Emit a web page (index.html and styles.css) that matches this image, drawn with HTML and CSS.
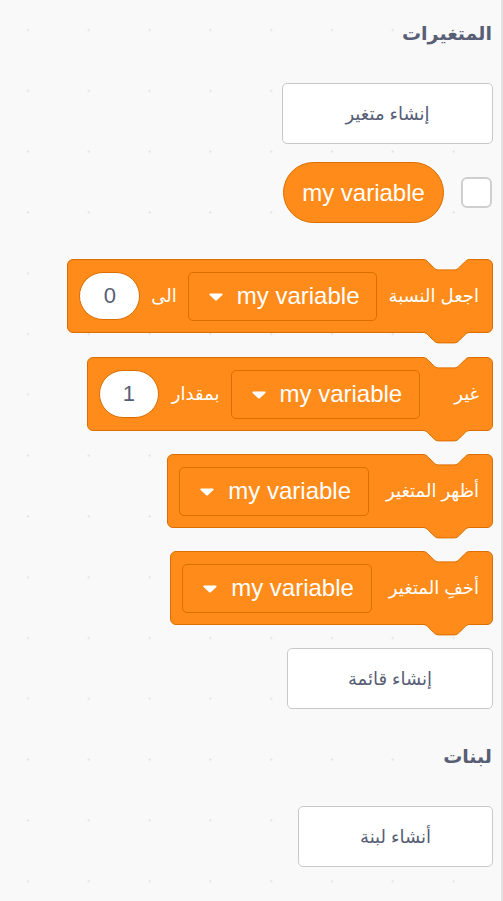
FILE: index.html
```html
<!DOCTYPE html>
<html lang="ar">
<head>
<meta charset="utf-8">
<title>المتغيرات</title>
<link rel="stylesheet" href="styles.css">
</head>
<body>
<div class="palette">
  <h2 class="cat-title cat-vars">المتغيرات</h2>

  <button class="make-btn btn-var">إنشاء متغير</button>

  <div class="reporter-row">
    <span class="checkbox"></span>
    <div class="reporter">my variable</div>
  </div>

  <div class="block block-set">
    <svg class="notch" width="50" height="13" viewBox="0 0 50 13"><path class="nf" d="M1,0 H47.8 V0.5 C45.2,0.5 43.9,1.8 42.6,3.1 L37.4,8.3 C36.1,9.6 34.8,10.9 32.2,10.9 H16.6 C14,10.9 12.7,9.6 11.4,8.3 L6.2,3.1 C4.9,1.8 3.6,0.5 1,0.5 Z"/><path class="ns" d="M1,0.5 C3.6,0.5 4.9,1.8 6.2,3.1 L11.4,8.3 C12.7,9.6 14,10.9 16.6,10.9 H32.2 C34.8,10.9 36.1,9.6 37.4,8.3 L42.6,3.1 C43.9,1.8 45.2,0.5 47.8,0.5"/></svg>
    <span class="label">اجعل النسبة</span>
    <span class="dropdown"><span class="dd-text">my variable</span><svg class="arrow" width="14" height="8" viewBox="0 0 14 8"><path d="M1.2,0.5 H12.8 C13.6,0.5 13.9,1.3 13.4,1.9 L7.8,7.3 C7.4,7.7 6.6,7.7 6.2,7.3 L0.6,1.9 C0.1,1.3 0.4,0.5 1.2,0.5 Z"/></svg></span>
    <span class="label">الى</span>
    <span class="num num-wide">0</span>
    <svg class="tab" width="50" height="13" viewBox="0 0 50 13"><path class="tf" d="M1,0 H47.8 V0.5 C45.2,0.5 43.9,1.8 42.6,3.1 L37.4,8.3 C36.1,9.6 34.8,10.9 32.2,10.9 H16.6 C14,10.9 12.7,9.6 11.4,8.3 L6.2,3.1 C4.9,1.8 3.6,0.5 1,0.5 Z"/><path class="ns" d="M1,0.5 C3.6,0.5 4.9,1.8 6.2,3.1 L11.4,8.3 C12.7,9.6 14,10.9 16.6,10.9 H32.2 C34.8,10.9 36.1,9.6 37.4,8.3 L42.6,3.1 C43.9,1.8 45.2,0.5 47.8,0.5"/></svg>
  </div>

  <div class="block block-change">
    <svg class="notch" width="50" height="13" viewBox="0 0 50 13"><path class="nf" d="M1,0 H47.8 V0.5 C45.2,0.5 43.9,1.8 42.6,3.1 L37.4,8.3 C36.1,9.6 34.8,10.9 32.2,10.9 H16.6 C14,10.9 12.7,9.6 11.4,8.3 L6.2,3.1 C4.9,1.8 3.6,0.5 1,0.5 Z"/><path class="ns" d="M1,0.5 C3.6,0.5 4.9,1.8 6.2,3.1 L11.4,8.3 C12.7,9.6 14,10.9 16.6,10.9 H32.2 C34.8,10.9 36.1,9.6 37.4,8.3 L42.6,3.1 C43.9,1.8 45.2,0.5 47.8,0.5"/></svg>
    <span class="label label-first-wide">غير</span>
    <span class="dropdown"><span class="dd-text">my variable</span><svg class="arrow" width="14" height="8" viewBox="0 0 14 8"><path d="M1.2,0.5 H12.8 C13.6,0.5 13.9,1.3 13.4,1.9 L7.8,7.3 C7.4,7.7 6.6,7.7 6.2,7.3 L0.6,1.9 C0.1,1.3 0.4,0.5 1.2,0.5 Z"/></svg></span>
    <span class="label label-mid">بمقدار</span>
    <span class="num">1</span>
    <svg class="tab" width="50" height="13" viewBox="0 0 50 13"><path class="tf" d="M1,0 H47.8 V0.5 C45.2,0.5 43.9,1.8 42.6,3.1 L37.4,8.3 C36.1,9.6 34.8,10.9 32.2,10.9 H16.6 C14,10.9 12.7,9.6 11.4,8.3 L6.2,3.1 C4.9,1.8 3.6,0.5 1,0.5 Z"/><path class="ns" d="M1,0.5 C3.6,0.5 4.9,1.8 6.2,3.1 L11.4,8.3 C12.7,9.6 14,10.9 16.6,10.9 H32.2 C34.8,10.9 36.1,9.6 37.4,8.3 L42.6,3.1 C43.9,1.8 45.2,0.5 47.8,0.5"/></svg>
  </div>

  <div class="block block-show">
    <svg class="notch" width="50" height="13" viewBox="0 0 50 13"><path class="nf" d="M1,0 H47.8 V0.5 C45.2,0.5 43.9,1.8 42.6,3.1 L37.4,8.3 C36.1,9.6 34.8,10.9 32.2,10.9 H16.6 C14,10.9 12.7,9.6 11.4,8.3 L6.2,3.1 C4.9,1.8 3.6,0.5 1,0.5 Z"/><path class="ns" d="M1,0.5 C3.6,0.5 4.9,1.8 6.2,3.1 L11.4,8.3 C12.7,9.6 14,10.9 16.6,10.9 H32.2 C34.8,10.9 36.1,9.6 37.4,8.3 L42.6,3.1 C43.9,1.8 45.2,0.5 47.8,0.5"/></svg>
    <span class="label label-var">أظهر المتغير</span>
    <span class="dropdown"><span class="dd-text">my variable</span><svg class="arrow" width="14" height="8" viewBox="0 0 14 8"><path d="M1.2,0.5 H12.8 C13.6,0.5 13.9,1.3 13.4,1.9 L7.8,7.3 C7.4,7.7 6.6,7.7 6.2,7.3 L0.6,1.9 C0.1,1.3 0.4,0.5 1.2,0.5 Z"/></svg></span>
    <svg class="tab" width="50" height="13" viewBox="0 0 50 13"><path class="tf" d="M1,0 H47.8 V0.5 C45.2,0.5 43.9,1.8 42.6,3.1 L37.4,8.3 C36.1,9.6 34.8,10.9 32.2,10.9 H16.6 C14,10.9 12.7,9.6 11.4,8.3 L6.2,3.1 C4.9,1.8 3.6,0.5 1,0.5 Z"/><path class="ns" d="M1,0.5 C3.6,0.5 4.9,1.8 6.2,3.1 L11.4,8.3 C12.7,9.6 14,10.9 16.6,10.9 H32.2 C34.8,10.9 36.1,9.6 37.4,8.3 L42.6,3.1 C43.9,1.8 45.2,0.5 47.8,0.5"/></svg>
  </div>

  <div class="block block-hide">
    <svg class="notch" width="50" height="13" viewBox="0 0 50 13"><path class="nf" d="M1,0 H47.8 V0.5 C45.2,0.5 43.9,1.8 42.6,3.1 L37.4,8.3 C36.1,9.6 34.8,10.9 32.2,10.9 H16.6 C14,10.9 12.7,9.6 11.4,8.3 L6.2,3.1 C4.9,1.8 3.6,0.5 1,0.5 Z"/><path class="ns" d="M1,0.5 C3.6,0.5 4.9,1.8 6.2,3.1 L11.4,8.3 C12.7,9.6 14,10.9 16.6,10.9 H32.2 C34.8,10.9 36.1,9.6 37.4,8.3 L42.6,3.1 C43.9,1.8 45.2,0.5 47.8,0.5"/></svg>
    <span class="label label-var">أخفِ المتغير</span>
    <span class="dropdown"><span class="dd-text">my variable</span><svg class="arrow" width="14" height="8" viewBox="0 0 14 8"><path d="M1.2,0.5 H12.8 C13.6,0.5 13.9,1.3 13.4,1.9 L7.8,7.3 C7.4,7.7 6.6,7.7 6.2,7.3 L0.6,1.9 C0.1,1.3 0.4,0.5 1.2,0.5 Z"/></svg></span>
    <svg class="tab" width="50" height="13" viewBox="0 0 50 13"><path class="tf" d="M1,0 H47.8 V0.5 C45.2,0.5 43.9,1.8 42.6,3.1 L37.4,8.3 C36.1,9.6 34.8,10.9 32.2,10.9 H16.6 C14,10.9 12.7,9.6 11.4,8.3 L6.2,3.1 C4.9,1.8 3.6,0.5 1,0.5 Z"/><path class="ns" d="M1,0.5 C3.6,0.5 4.9,1.8 6.2,3.1 L11.4,8.3 C12.7,9.6 14,10.9 16.6,10.9 H32.2 C34.8,10.9 36.1,9.6 37.4,8.3 L42.6,3.1 C43.9,1.8 45.2,0.5 47.8,0.5"/></svg>
  </div>

  <button class="make-btn btn-list">إنشاء قائمة</button>

  <h2 class="cat-title cat-blocks">لبنات</h2>

  <button class="make-btn btn-block">أنشاء لبنة</button>
</div>
</body>
</html>
```

FILE: styles.css
```css
html, body {
  margin: 0;
  padding: 0;
}

body {
  width: 503px;
  height: 901px;
  overflow: hidden;
  background-color: #f9f9f9;
  background-image: radial-gradient(circle, #e4e4e4 0.9px, rgba(249, 249, 249, 0) 1.4px);
  background-size: 60.8px 60.8px;
  background-position: -2.4px -0.4px;
  font-family: "Liberation Sans", "DejaVu Sans", sans-serif;
}

.palette {
  box-sizing: border-box;
  width: 503px;
  height: 901px;
  border-right: 2px solid #e2e2e2;
  padding-right: 8px;
  display: flex;
  flex-direction: column;
  align-items: flex-end;
}

.cat-title {
  margin: 0;
  font-size: 19px;
  line-height: 20px;
  font-weight: bold;
  color: #575e75;
  direction: rtl;
  margin-right: 1px;
}

.cat-vars {
  margin-top: 24px;
}

.cat-blocks {
  margin-top: 38px;
}

.make-btn {
  box-sizing: border-box;
  height: 61px;
  background: #ffffff;
  border: 1px solid #c9c9c9;
  border-radius: 5px;
  color: #575e75;
  font-family: "Liberation Sans", "DejaVu Sans", sans-serif;
  font-size: 18px;
  direction: rtl;
  padding: 0;
  display: flex;
  align-items: center;
  justify-content: center;
}

.btn-var {
  width: 211px;
  margin-top: 39px;
}

.btn-list {
  width: 206px;
  margin-top: 23px;
}

.btn-block {
  width: 195px;
  margin-top: 39px;
}

.reporter-row {
  margin-top: 18px;
  display: flex;
  flex-direction: row-reverse;
  align-items: center;
  gap: 17px;
}

.checkbox {
  box-sizing: border-box;
  width: 31px;
  height: 31px;
  margin-right: 1px;
  border: 2px solid #cfcfcf;
  border-radius: 6px;
  background: #ffffff;
}

.reporter {
  box-sizing: border-box;
  height: 61px;
  width: 161px;
  border-radius: 31px;
  background: #ff8c1a;
  border: 1px solid #db6e00;
  color: #ffffff;
  font-size: 24px;
  display: flex;
  align-items: center;
  justify-content: center;
}

.block {
  position: relative;
  box-sizing: border-box;
  height: 74px;
  background: #ff8c1a;
  border: 1px solid #db6e00;
  border-radius: 6px;
  direction: rtl;
  display: flex;
  align-items: center;
  padding: 0 13px 0 11px;
  gap: 11px;
  color: #ffffff;
  margin-top: 23px;
}

.block-set {
  margin-top: 36px;
}

.block-change {
  margin-top: 24px;
}

.notch, .tab {
  position: absolute;
  right: 20px;
  overflow: visible;
}

.notch {
  top: -1px;
}

.tab {
  top: 100%;
}

.nf {
  fill: #f9f9f9;
}

.tf {
  fill: #ff8c1a;
}

.ns {
  fill: none;
  stroke: #db6e00;
  stroke-width: 1;
}

.label {
  font-size: 18px;
  white-space: nowrap;
}

.label-first-wide {
  margin-left: 23px;
}

.label-mid {
  margin-left: 2px;
}

.label-var {
  margin-left: 6px;
}

.dropdown {
  box-sizing: border-box;
  height: 49px;
  border: 1px solid #db6e00;
  border-radius: 5px;
  background: #ff8c1a;
  display: flex;
  align-items: center;
  gap: 14px;
  padding: 0 17px 0 20px;
}

.dd-text {
  direction: ltr;
  font-size: 24px;
  white-space: nowrap;
}

.arrow {
  fill: #ffffff;
  margin-top: 1px;
}

.num {
  box-sizing: border-box;
  height: 48px;
  width: 60px;
  border-radius: 24px;
  background: #ffffff;
  border: 1px solid #db6e00;
  color: #575e75;
  font-size: 22px;
  display: flex;
  align-items: center;
  justify-content: center;
}

.num-wide {
  width: 61px;
}
```
